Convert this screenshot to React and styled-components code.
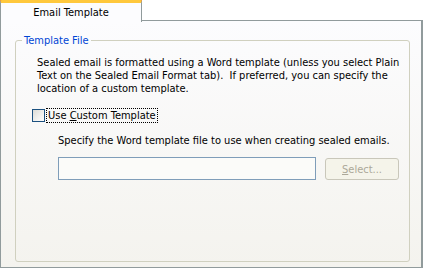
import React from "react";
import styled, { createGlobalStyle } from "styled-components";

const GlobalStyle = createGlobalStyle`
  html, body {
    margin: 0;
    padding: 0;
    background: #ffffff;
  }
  body {
    font-family: "DejaVu Sans Condensed", "DejaVu Sans", "Liberation Sans", sans-serif;
    font-stretch: condensed;
    font-size: 11px;
    color: #000000;
  }
`;

const Window = styled.div`
  width: 423px;
  height: 269px;
  display: flex;
  flex-direction: column;
`;

const TabStrip = styled.div`
  display: flex;
  height: 20px;
`;

const Tab = styled.div`
  position: relative;
  z-index: 1;
  width: 140px;
  height: 19px;
  margin-bottom: -1px;
  border: 1px solid #919b9c;
  border-top: 3px solid #ffc83c;
  border-bottom: none;
  border-radius: 2px 2px 0 0;
  background: #fcfcfe;
  display: flex;
  justify-content: center;
  align-items: center;
  box-shadow: 0 -1px 0 #e68b2c;
`;

const Panel = styled.div`
  box-sizing: border-box;
  width: 423px;
  height: 248px;
  border: 1px solid #919b9c;
  border-right-width: 2px;
  background: linear-gradient(to bottom, #fcfcfe 0%, #f4f3ee 100%);
  padding: 13px 0 0 14px;
`;

const GroupBox = styled.fieldset`
  width: 395px;
  height: 228px;
  box-sizing: border-box;
  margin: 0;
  padding: 0;
  border: 1px solid #d0d0bf;
  border-radius: 3px;
`;

const Legend = styled.legend`
  margin-left: 6px;
  padding: 0 2px;
  color: #0046d5;
  line-height: 13px;
`;

const Body = styled.div`
  padding: 9px 0 0 21px;
  display: flex;
  flex-direction: column;
`;

const Para = styled.p`
  margin: 0;
  line-height: 13px;
  white-space: pre;
`;

const CheckRow = styled.label`
  display: flex;
  align-items: center;
  margin: 14px 0 0 -5px;
  gap: 2px;
`;

const CheckBox = styled.span`
  width: 11px;
  height: 11px;
  border: 1px solid #1c5180;
  background: linear-gradient(135deg, #dcdcd7 0%, #ffffff 100%);
`;

const FocusLabel = styled.span`
  outline: 1px dotted #000000;
  padding: 0 1px;
  line-height: 13px;
`;

const Key = styled.span`
  text-decoration: underline;
`;

const Indented = styled.div`
  margin: 12px 0 0 21px;
  display: flex;
  flex-direction: column;
`;

const Hint = styled.div`
  line-height: 13px;
`;

const FileRow = styled.div`
  display: flex;
  align-items: center;
  margin-top: 10px;
  gap: 9px;
`;

const FileInput = styled.input`
  width: 258px;
  height: 23px;
  box-sizing: border-box;
  border: 1px solid #7f9db9;
  background: #fbfbf9;
  margin: 0;
  padding: 0 3px;
  font: inherit;
  outline: none;
`;

const Button = styled.button`
  width: 74px;
  height: 22px;
  box-sizing: border-box;
  border: 1px solid #c9c7ba;
  border-radius: 3px;
  background: #f5f4ea;
  color: #aca899;
  font: inherit;
  padding: 0;
  margin-top: 1px;
`;

export default function App() {
  return (
    <>
      <GlobalStyle />
      <Window>
        <TabStrip>
          <Tab>Email Template</Tab>
        </TabStrip>
        <Panel>
          <GroupBox>
            <Legend>Template File</Legend>
            <Body>
              <Para>
                {"Sealed email is formatted using a Word template (unless you select Plain\n"}
                {"Text on the Sealed Email Format tab).  If preferred, you can specify the\n"}
                {"location of a custom template."}
              </Para>
              <CheckRow>
                <CheckBox />
                <FocusLabel>
                  Use <Key>C</Key>ustom Template
                </FocusLabel>
              </CheckRow>
              <Indented>
                <Hint>Specify the Word template file to use when creating sealed emails.</Hint>
                <FileRow>
                  <FileInput type="text" />
                  <Button disabled>
                    <Key>S</Key>elect...
                  </Button>
                </FileRow>
              </Indented>
            </Body>
          </GroupBox>
        </Panel>
      </Window>
    </>
  );
}
